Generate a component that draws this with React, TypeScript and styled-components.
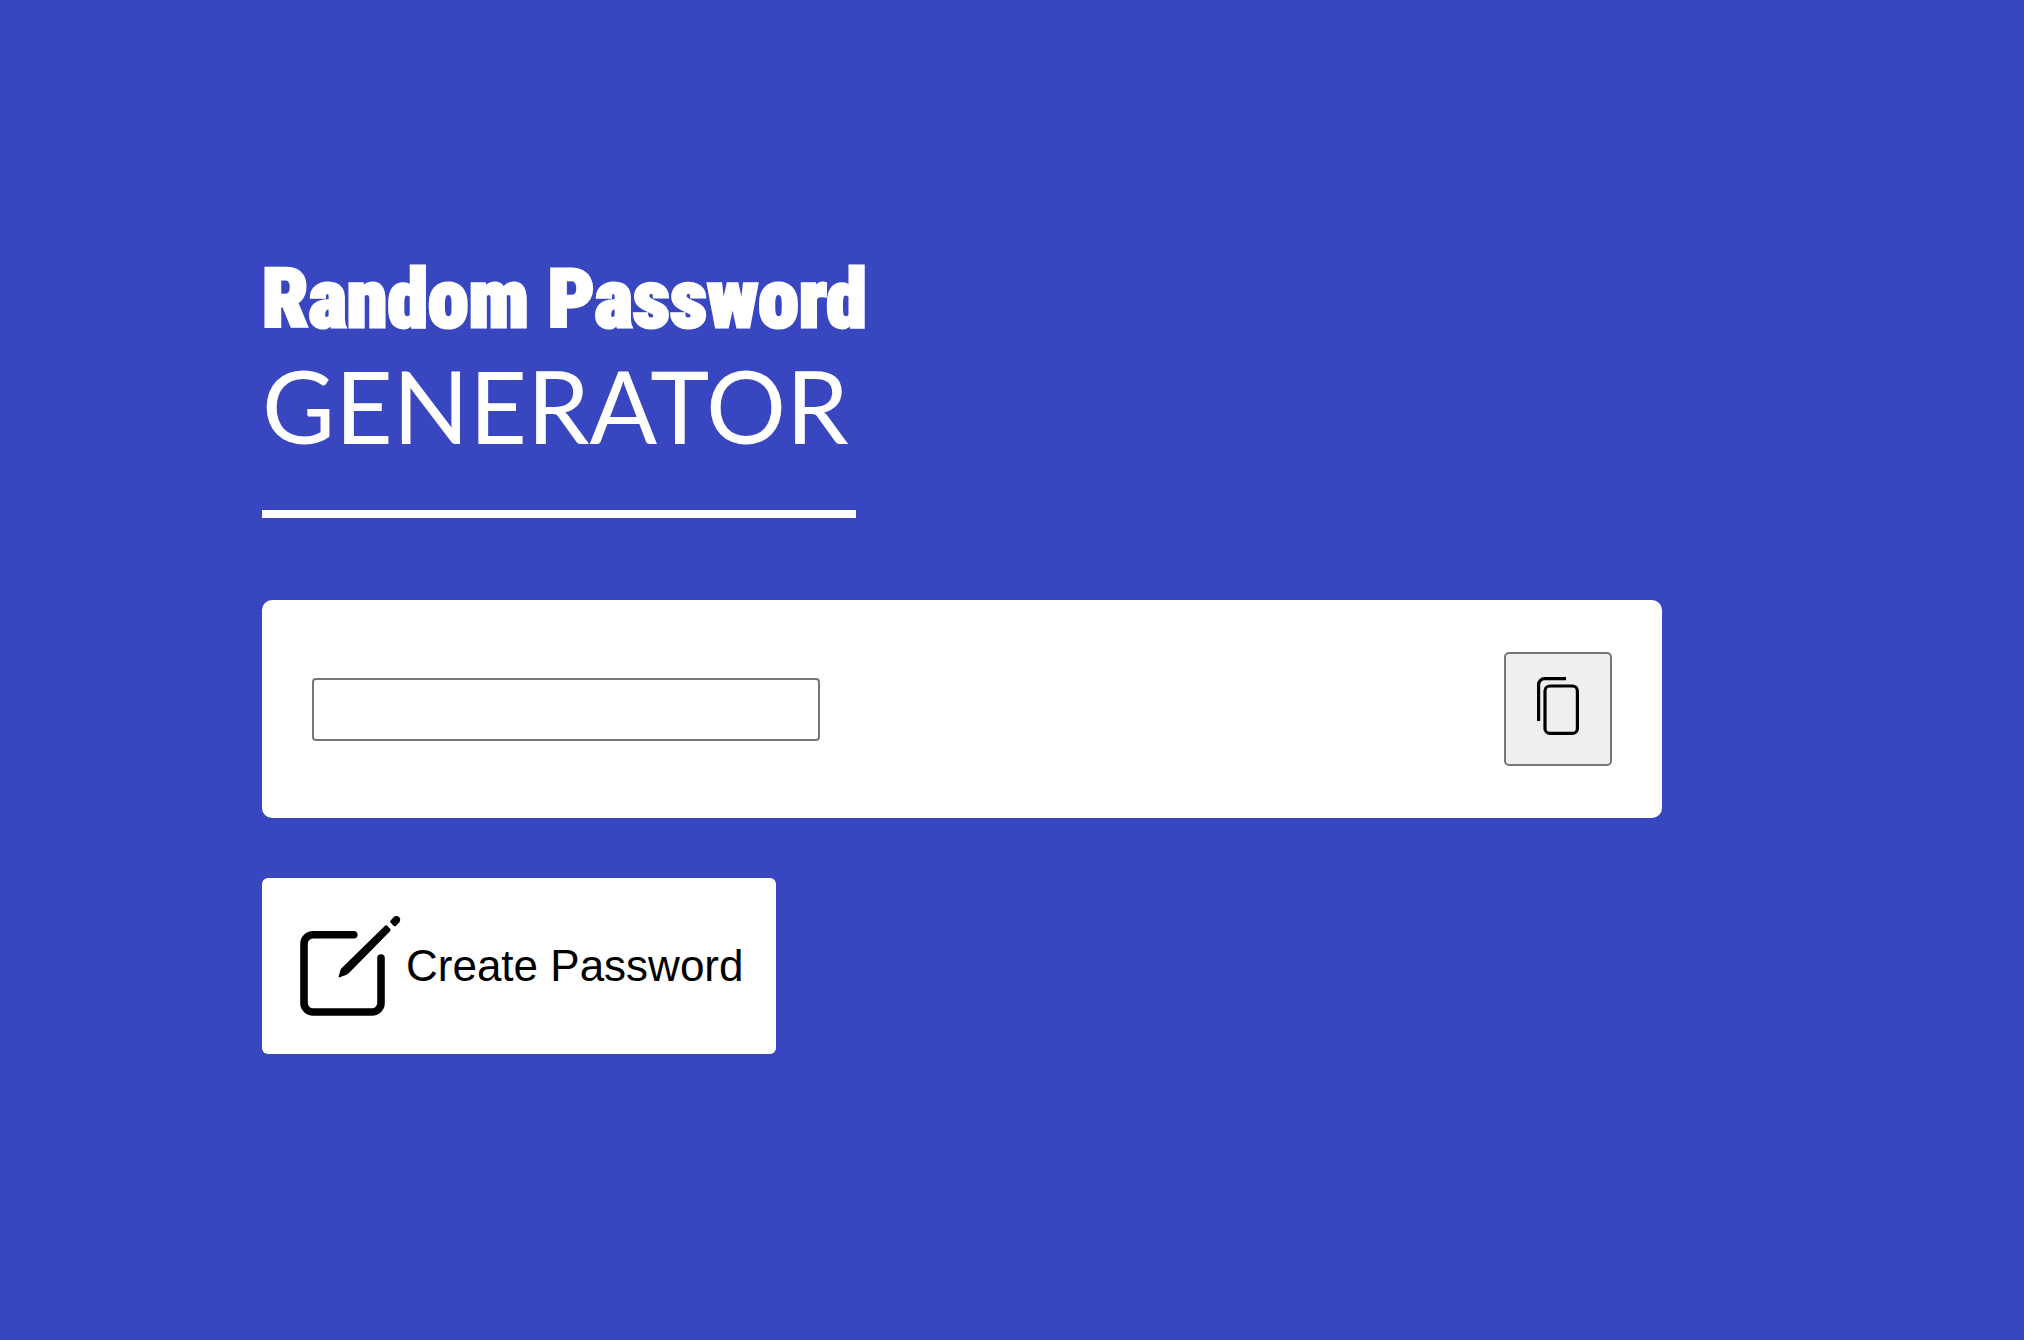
import React, { useState } from "react";
import styled, { createGlobalStyle } from "styled-components";

const GlobalStyle = createGlobalStyle`
  * { box-sizing: border-box; }
  body {
    margin: 0;
    background: #3846c0;
    font-family: "Liberation Sans", Arial, sans-serif;
  }
`;

const Page = styled.main`
  min-height: 100vh;
  padding: 250px 262px 100px;
  display: flex;
  flex-direction: column;
  align-items: flex-start;
`;

const Heading = styled.h1`
  margin: 0;
  color: #fff;
  font-weight: 700;
  white-space: nowrap;
`;

const HeadingTop = styled.span`
  display: block;
  font-family: Impact, "Roboto Condensed", Roboto, sans-serif;
  font-size: 82px;
  line-height: 98px;
  font-weight: 900;
  -webkit-text-stroke: 3px #fff;
`;

const HeadingBottom = styled.span`
  display: block;
  font-family: Papyrus, Lato, sans-serif;
  font-size: 100px;
  line-height: 114px;
  font-weight: 400;
`;

const Rule = styled.div`
  width: 594px;
  max-width: 100%;
  height: 8px;
  margin-top: 48px;
  background: #fff;
`;

const Card = styled.section`
  display: flex;
  align-items: center;
  justify-content: space-between;
  width: 100%;
  max-width: 1400px;
  margin-top: 82px;
  padding: 52px 50px;
  border-radius: 10px;
  background: #fff;
`;

const PasswordInput = styled.input`
  width: 508px;
  height: 63px;
  padding: 2px 4px;
  border: 2px solid #767676;
  border-radius: 4px;
  background: #fff;
  font: 44px "Liberation Sans", Arial, sans-serif;
`;

const CopyButton = styled.button`
  display: flex;
  padding: 23px 31px 29px;
  border: 2px solid #767676;
  border-radius: 5px;
  background: #efefef;
  color: #000;
`;

const CreateButton = styled.button`
  display: flex;
  align-items: center;
  gap: 4px;
  margin-top: 60px;
  padding: 36px 33px 36px 36px;
  border: 0;
  border-radius: 6px;
  background: #fff;
  color: #000;
  font: 44px "Liberation Sans", Arial, sans-serif;
`;

const CopyIcon = () => (
  <svg width="42" height="58" viewBox="0 0 42 58" fill="none" stroke="currentColor" strokeWidth="3.2" aria-hidden="true">
    <path d="M29 1.6H7.6a6 6 0 0 0-6 6V44" />
    <rect x="8" y="9" width="32.4" height="47.4" rx="5" />
  </svg>
);

const EditIcon = () => (
  <svg width="104" height="104" viewBox="-2 -2 104 104" aria-hidden="true">
    <path
      d="M53.8 18.8H13a9 9 0 0 0-9 9V87a9 9 0 0 0 9 9H72a9 9 0 0 0 9-9V42"
      fill="none"
      stroke="currentColor"
      strokeWidth="7.6"
      strokeLinecap="round"
    />
    <path d="M39 61.5Q38.4 61 38.8 60L40.3 54.5Q40.7 53 42 51.7L85 9.8Q86.3 8.8 87.5 9.9L90.3 13Q91 14 90 15.2L49 57Q47.8 58.2 46 59Z" />
    <path d="M90.3 6.3Q89.8 5.6 90.4 4.8L93.5 1.3C97-2.4 102.3 2 99.4 6.2L96 9.8Q94.6 10.8 93.5 9.8Z" />
  </svg>
);

const CHARS =
  "ABCDEFGHIJKLMNOPQRSTUVWXYZabcdefghijklmnopqrstuvwxyz0123456789@#$%^&*()_+~|}{[]><";

export default function App() {
  const [password, setPassword] = useState("");

  const createPassword = () =>
    setPassword(
      Array.from({ length: 12 }, () => CHARS[Math.floor(Math.random() * CHARS.length)]).join("")
    );

  return (
    <>
      <GlobalStyle />
      <Page>
        <Heading>
          <HeadingTop>Random Password</HeadingTop>
          <HeadingBottom>GENERATOR</HeadingBottom>
        </Heading>
        <Rule />
        <Card>
          <PasswordInput type="text" aria-label="Password" value={password} readOnly />
          <CopyButton
            type="button"
            aria-label="Copy password"
            onClick={() => navigator.clipboard?.writeText(password)}
          >
            <CopyIcon />
          </CopyButton>
        </Card>
        <CreateButton type="button" onClick={createPassword}>
          <EditIcon />
          Create Password
        </CreateButton>
      </Page>
    </>
  );
}
